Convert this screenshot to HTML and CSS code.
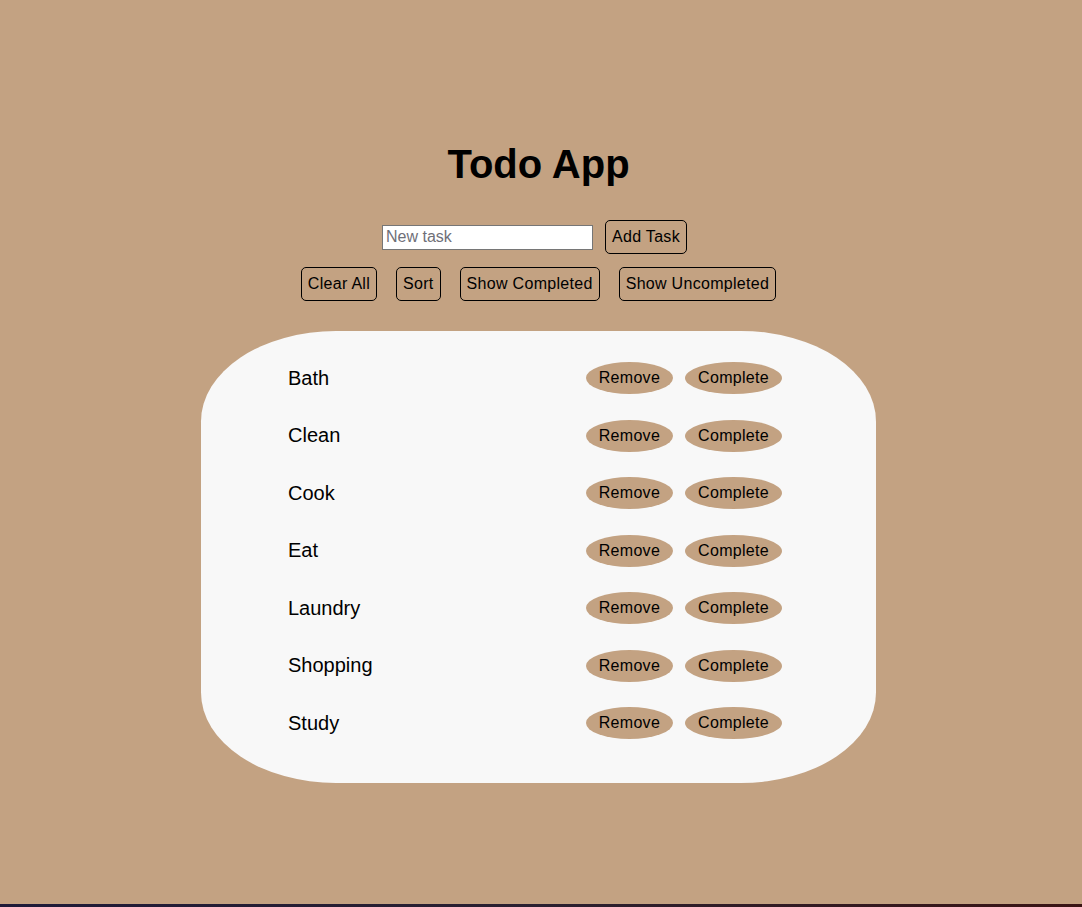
FILE: index.html
```html
<!DOCTYPE html>
<html lang="en">
<head>
<meta charset="utf-8">
<title>Todo App</title>
<link rel="stylesheet" href="styles.css">
</head>
<body>
<div class="page">
  <h1 class="title">Todo App</h1>
  <div class="add-row">
    <input class="task-input" type="text" placeholder="New task">
    <button class="btn">Add Task</button>
  </div>
  <div class="controls">
    <button class="btn">Clear All</button>
    <button class="btn">Sort</button>
    <button class="btn">Show Completed</button>
    <button class="btn">Show Uncompleted</button>
  </div>
  <ul class="list">
    <li class="item"><span class="name">Bath</span><span class="actions"><button class="pill">Remove</button><button class="pill">Complete</button></span></li>
    <li class="item"><span class="name">Clean</span><span class="actions"><button class="pill">Remove</button><button class="pill">Complete</button></span></li>
    <li class="item"><span class="name">Cook</span><span class="actions"><button class="pill">Remove</button><button class="pill">Complete</button></span></li>
    <li class="item"><span class="name">Eat</span><span class="actions"><button class="pill">Remove</button><button class="pill">Complete</button></span></li>
    <li class="item"><span class="name">Laundry</span><span class="actions"><button class="pill">Remove</button><button class="pill">Complete</button></span></li>
    <li class="item"><span class="name">Shopping</span><span class="actions"><button class="pill">Remove</button><button class="pill">Complete</button></span></li>
    <li class="item"><span class="name">Study</span><span class="actions"><button class="pill">Remove</button><button class="pill">Complete</button></span></li>
  </ul>
</div>
</body>
</html>
```
FILE: styles.css
```css
html {
  margin: 0;
  height: 100%;
  background: linear-gradient(90deg, #1e1a38 0%, #2a2030 50%, #3a1414 100%);
}
body {
  margin: 0;
  height: calc(100vh - 3px);
  background: #c3a282;
  font-family: "Liberation Sans", Arial, sans-serif;
  color: #000;
}
.page {
  display: flex;
  flex-direction: column;
  align-items: center;
  padding: 141px 5px 0 0;
}
.title {
  margin: 0;
  font-size: 40px;
  line-height: 46px;
  font-weight: bold;
}
.add-row {
  display: flex;
  align-items: center;
  gap: 12px;
  margin-top: 33px;
  margin-right: 8px;
}
.task-input {
  box-sizing: border-box;
  width: 211px;
  height: 25px;
  border: 1px solid #767676;
  background: #fff;
  padding: 1px 3px;
  font-family: "Liberation Sans", Arial, sans-serif;
  font-size: 16px;
  margin: 0;
}
.task-input::placeholder {
  color: #6f6f78;
}
.btn {
  box-sizing: border-box;
  height: 34px;
  padding: 0 6px;
  border: 1px solid #000;
  border-radius: 5px;
  background: transparent;
  font-family: "Liberation Sans", Arial, sans-serif;
  font-size: 16px;
  letter-spacing: 0.3px;
  color: #000;
  margin: 0;
}
.controls {
  display: flex;
  gap: 19px;
  margin-top: 13px;
}
.list {
  list-style: none;
  margin: 30px 0 0;
  box-sizing: border-box;
  width: 675px;
  padding: 31px 94px 44px 87px;
  background: #f8f8f8;
  border-radius: 20%;
  display: flex;
  flex-direction: column;
  gap: 25.5px;
}
.item {
  display: flex;
  justify-content: space-between;
  align-items: center;
  height: 32px;
}
.name {
  font-size: 20px;
}
.actions {
  display: flex;
  gap: 12px;
}
.pill {
  height: 32px;
  padding: 0 13px;
  border: none;
  border-radius: 50%;
  background: #c3a282;
  font-family: "Liberation Sans", Arial, sans-serif;
  font-size: 16px;
  letter-spacing: 0.3px;
  color: #000;
  margin: 0;
}
```
